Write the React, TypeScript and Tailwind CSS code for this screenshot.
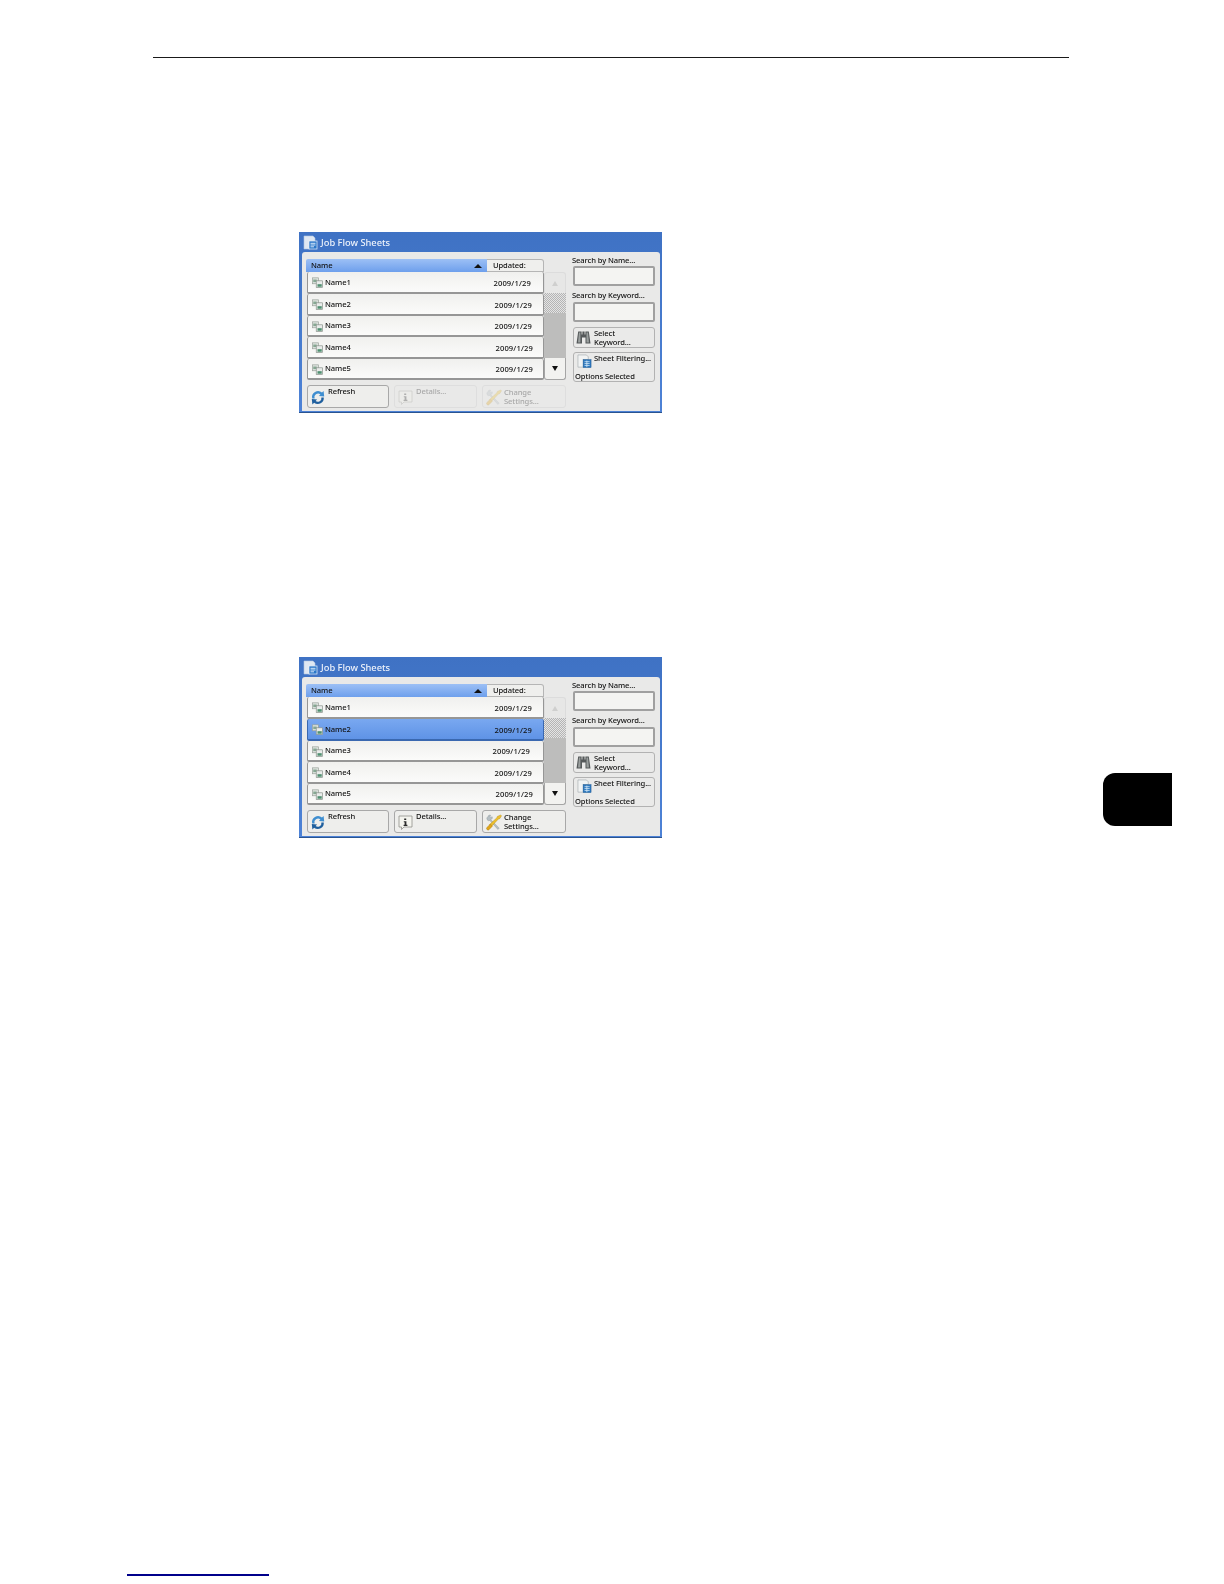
import React from 'react';

const font = { fontFamily: '"Noto Sans", "Liberation Sans", sans-serif' };

const SheetIcon = () => (
    <svg width="11" height="11" viewBox="0 0 13 13" className="shrink-0">
        <rect x="0.5" y="1" width="7" height="7" fill="#dde2de" stroke="#97a098" strokeWidth="0.8" />
        <rect x="1.5" y="3" width="4" height="3" fill="#86a893" />
        <rect x="5" y="4.5" width="7.5" height="8" fill="#e9ecea" stroke="#858e87" strokeWidth="0.8" />
        <rect x="6.5" y="8.5" width="5" height="3" fill="#4f8f70" />
    </svg>
);

const TitleIcon = () => (
    <svg width="15" height="16" viewBox="0 0 15 16" className="shrink-0">
        <path d="M1 1h9l2 2v3H7v8H1z" fill="#dfe7f2" stroke="#b4c6e0" strokeWidth="0.6" />
        <rect x="6" y="6" width="8" height="8" fill="#2a76c8" stroke="#eaf2fb" strokeWidth="0.7" />
        <path d="M7.5 8.3h5M7.5 10h5M7.5 11.8h3.5" stroke="#e8f4ff" strokeWidth="0.9" />
    </svg>
);

const RefreshIcon = () => (
    <svg width="16" height="17" viewBox="0 0 16 17" className="shrink-0">
        <path d="M2.2 9.5A6 6 0 0 1 12 3.6L13.6 2l.6 5.4-5.3-.5 1.5-1.5A3.7 3.7 0 0 0 4.6 9.5z" fill="#3f8ed0" />
        <path d="M13.8 8.5a6 6 0 0 1-9.7 5.2L2.4 15.4 1.8 10l5.3.6-1.5 1.5a3.7 3.7 0 0 0 5.8-3.6z" fill="#1f5f9e" />
    </svg>
);

const DetailsIcon = ({ off }: { off: boolean }) => (
    <svg width="15" height="16" viewBox="0 0 15 16" className="shrink-0" opacity={off ? 0.3 : 1}>
        <path d="M1 1h13v11H6l-2.5 2.5V12H1z" fill="#f4f4ee" stroke="#8f8f8a" strokeWidth="0.8" />
        <path d="M6.2 3.4h2v1.6h-2zM5.8 6.2h2.6v3.6h1v1.1H5.6V9.8h1V7.3h-.8z" fill="#2b2b2b" />
    </svg>
);

const ToolsIcon = ({ off }: { off: boolean }) => (
    <svg width="17" height="18" viewBox="0 0 18 18" className="shrink-0" opacity={off ? 0.3 : 1}>
        <path d="M2 3.5a2 2 0 0 1 3-1.6L4.2 3.2l1 1 1.3-.8a2 2 0 0 1-1.6 3L14 15.5l-1.4 1.4-8.6-9.6A2 2 0 0 1 2 3.5z" fill="#b5bec3" stroke="#848e94" strokeWidth="0.4" />
        <path d="M15.5 1.5l1 1-2 3-1.3.3L5.5 14l-2-2 8-7.5.4-1.3z" fill="#ecc02f" stroke="#a98216" strokeWidth="0.4" />
        <path d="M4.6 11.2l2.2 2.2-3.4 3.6a1.6 1.6 0 0 1-2.4-2.3z" fill="#e0a51c" stroke="#a47a12" strokeWidth="0.4" />
    </svg>
);

const BinocularsIcon = () => (
    <svg width="15" height="15" viewBox="0 0 15 14" className="shrink-0">
        <path d="M2.2 1h3.4v3h.8V1h2.2v3h.8V1h3.4l1.7 12h-5V7H6v6H.5z" fill="#55595a" />
        <path d="M3 2h1.4v10H2zM10.5 2H12l1 10h-2.5z" fill="#9a9f9e" />
    </svg>
);

const FilterIcon = () => (
    <svg width="15" height="15" viewBox="0 0 16 16" className="shrink-0">
        <path d="M1 1h9l2 2v3H7v8H1z" fill="#f1f3f3" stroke="#a4abaf" strokeWidth="0.7" />
        <rect x="6.5" y="6" width="8.5" height="8.5" fill="#2e78bd" stroke="#1e5a94" strokeWidth="0.5" />
        <path d="M8 8.2h5.5M8 10.2h5.5M8 12.2h5.5M10.5 7v7" stroke="#d8ecfb" strokeWidth="0.8" />
    </svg>
);

const rowHeights = ['h-[22px]', 'h-[22px]', 'h-[21px]', 'h-[22px]', 'h-[21px]'];

const Dialog = ({ active, dates }: { active: boolean; dates: string[] }) => {
    const off = !active;
    return (
        <div className="w-[363px] h-[181px] shrink-0 flex flex-col bg-gradient-to-b from-[#3f72c4] to-[#4d82d6] border-b border-[#2a5490] blur-[0.35px]" style={font}>
            <div className="h-[20px] shrink-0 flex items-center gap-[3px] pl-[4px] pt-[1px] text-[9.3px] font-medium text-[#eef3fb] leading-none">
                <TitleIcon />
                <span>Job Flow Sheets</span>
            </div>
            <div className="flex-1 ml-[3px] mr-[2px] mb-[1px] rounded-t-[3px] bg-[#e9e9e8] pl-[4px] pt-[7px] flex text-[7.6px] font-medium tracking-[-0.1px] leading-none text-[#111]">
                <div className="w-[260px] shrink-0 flex flex-col">
                    <div className="flex h-[13px] shrink-0">
                        <div className="w-[181px] rounded-tl-[2px] bg-gradient-to-b from-[#9cc0f5] to-[#6e9fec] flex items-center justify-between pl-[5px] pr-[5px]">
                            <span>Name</span>
                            <span className="w-0 h-0 border-x-[4px] border-x-transparent border-b-[4px] border-b-[#111]" />
                        </div>
                        <div className="w-[57px] rounded-tr-[3px] border border-l-0 border-[#b5b5b5] bg-[#efefed] flex items-center pl-[6px]">Updated:</div>
                    </div>
                    <div className="flex h-[108px] shrink-0">
                        <div className="w-[237px] ml-[1px] shrink-0 flex flex-col">
                            {dates.map((pad, i) => {
                                const selected = active && i === 1;
                                return (
                                    <div
                                        key={i}
                                        className={`${rowHeights[i]} flex items-center justify-between rounded-[2px] border-b-2 border-x ${selected ? 'border-[#3a68b0] bg-gradient-to-b from-[#79a8f0] to-[#5f93e6]' : 'border-[#969696] bg-gradient-to-b from-[#f0f0ee] to-[#fbfbfa]'}`}
                                    >
                                        <div className="flex items-center gap-[2px] pl-[4px] pt-[1px]">
                                            <SheetIcon />
                                            <span>Name{i + 1}</span>
                                        </div>
                                        <span className="tracking-[0.15px] pt-[3px]" style={{ paddingRight: pad }}>2009/1/29</span>
                                    </div>
                                );
                            })}
                        </div>
                        <div className="w-[22px] shrink-0 flex flex-col">
                            <div className="h-[21px] rounded-t-[3px] border border-b-0 border-[#dcdcdc] bg-[#e7e7e6] flex items-center justify-center">
                                <span className="w-0 h-0 border-x-[3px] border-x-transparent border-b-[5px] border-b-[#cfcfce]" />
                            </div>
                            <div className="h-[20px] bg-[repeating-conic-gradient(#b4b4b4_0_25%,#e4e4e4_0_50%)] bg-[length:2px_2px]" />
                            <div className="h-[45px] bg-[#bdbdbc]" />
                            <div className="h-[22px] rounded-b-[3px] border border-t-0 border-[#a5a5a5] bg-[#f2f2f0] flex items-center justify-center">
                                <span className="w-0 h-0 border-x-[3px] border-x-transparent border-t-[5px] border-t-[#111]" />
                            </div>
                        </div>
                    </div>
                    <div className="flex mt-[5px] pl-[1px] h-[23px] gap-[5px]">
                        <div className="w-[82px] rounded-[3px] border border-[#a8a8a8] bg-[#eeeeec] flex pl-[2px] pt-[2px] gap-[2px]">
                            <div className="pt-[1px]"><RefreshIcon /></div>
                            <span>Refresh</span>
                        </div>
                        <div className={`w-[83px] rounded-[3px] border flex pl-[3px] pt-[2px] gap-[3px] ${off ? 'border-[#dedede] text-[#a9a9a9]' : 'border-[#a8a8a8] bg-[#eeeeec]'}`}>
                            <div className="pt-[2px]"><DetailsIcon off={off} /></div>
                            <span>Details...</span>
                        </div>
                        <div className={`w-[84px] rounded-[3px] border flex pl-[3px] pt-[2px] gap-[1px] ${off ? 'border-[#dedede] text-[#a9a9a9]' : 'border-[#a8a8a8] bg-[#eeeeec]'}`}>
                            <ToolsIcon off={off} />
                            <span className="leading-[9px]">Change<br />Settings...</span>
                        </div>
                    </div>
                </div>
                <div className="w-[83px] ml-[6px] shrink-0 flex flex-col">
                    <div className="h-[8px] -mt-[2px] whitespace-nowrap">Search by Name...</div>
                    <div className="h-[20px] mt-[1px] ml-[1px] rounded-[2px] border-2 border-[#a0a0a0] bg-[#f4f4f2]" />
                    <div className="h-[8px] mt-[6px] whitespace-nowrap">Search by Keyword...</div>
                    <div className="h-[20px] mt-[2px] ml-[1px] rounded-[2px] border-2 border-[#a0a0a0] bg-[#f4f4f2]" />
                    <div className="h-[21px] mt-[5px] ml-[1px] rounded-[3px] border border-[#b2b2b2] bg-[#eaeae9] flex items-center pl-[2px] gap-[3px]">
                        <BinocularsIcon />
                        <span className="leading-[9px]">Select<br />Keyword...</span>
                    </div>
                    <div className="h-[30px] mt-[4px] ml-[1px] rounded-[3px] border border-[#b2b2b2] bg-[#eaeae9] flex flex-col pl-[1px] pt-[1px]">
                        <div className="flex gap-[2px] pl-[2px]">
                            <FilterIcon />
                            <span className="pt-[1px] whitespace-nowrap">Sheet Filtering...</span>
                        </div>
                        <span className="mt-[4px] whitespace-nowrap">Options Selected</span>
                    </div>
                </div>
            </div>
        </div>
    );
};

export default function App() {
    return (
        <div className="w-[1224px] h-[1584px] bg-white flex flex-col overflow-hidden">
            <div className="mt-[57px] ml-[153px] w-[916px] h-px bg-[#1a1a1a] shrink-0" />
            <div className="mt-[174px] ml-[299px] shrink-0">
                <Dialog active={false} dates={['12px', '11px', '11px', '10px', '10px']} />
            </div>
            <div className="mt-[244px] pl-[299px] pr-[52px] flex justify-between items-start shrink-0">
                <Dialog active={true} dates={['11px', '11px', '13px', '11px', '10px']} />
                <div className="mt-[116px] w-[69px] h-[53px] bg-black rounded-l-[12px]" />
            </div>
            <div className="mt-auto mb-[8px] ml-[127px] w-[142px] h-[2px] bg-[#00008b] shrink-0" />
        </div>
    );
}
